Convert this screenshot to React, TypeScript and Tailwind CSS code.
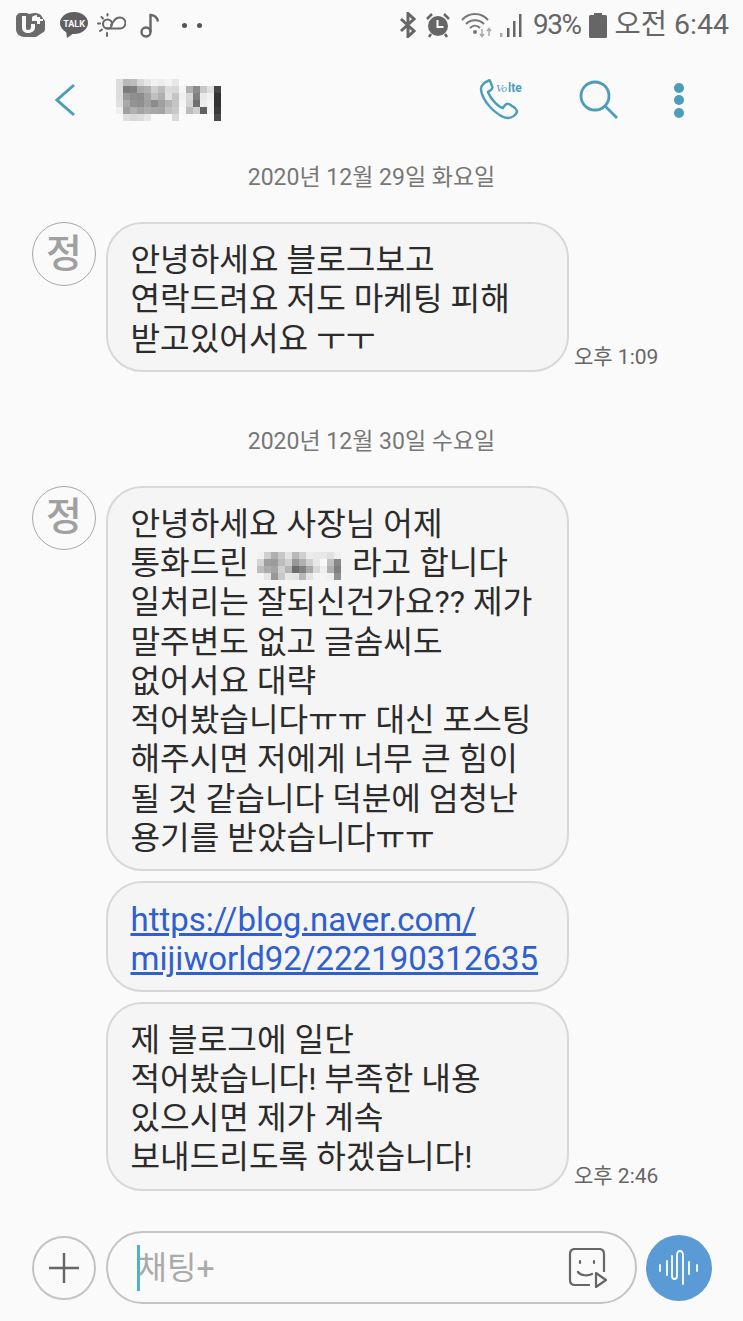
import { Fragment } from 'react'

const nameMosaic = [
  ['#dcdcdc', '#b9b9b9', '#bcbcbc', '#d8d8d8', '#e6e6e6', '#f2f2f2', '#ededed', '#f3f3f3', '#e8e8e8', '#fafafa', '#fafafa', '#fafafa', '#fafafa', '#fafafa', '#fafafa'],
  ['#dcdcdc', '#7b7b7b', '#808080', '#a8a8a8', '#b0b0b0', '#d0d0d0', '#bdbdbd', '#dcdcdc', '#d8d8d8', '#f4f4f4', '#b0b0b0', '#8c8c8c', '#c8c8c8', '#e0e0e0', '#444444'],
  ['#dcdcdc', '#999999', '#8f8f8f', '#8c8c8c', '#a4a4a4', '#c0c0c0', '#b0b0b0', '#e0e0e0', '#c4c4c4', '#f0f0f0', '#d8d8d8', '#808080', '#e8e8e8', '#f0f0f0', '#333333'],
  ['#e0e0e0', '#a8a8a8', '#949494', '#8f8f8f', '#a0a0a0', '#8c8c8c', '#a0a0a0', '#b4b4b4', '#c4c4c4', '#f4f4f4', '#d4d4d4', '#707070', '#eeeeee', '#f4f4f4', '#333333'],
  ['#f0f0f0', '#a0a0a0', '#b0b0b0', '#a4a4a4', '#acacac', '#a8a8a8', '#a4a4a4', '#c0c0c0', '#c8c8c8', '#f8f8f8', '#bcbcbc', '#d0d0d0', '#606060', '#f4f4f4', '#3a3a3a'],
  ['#fafafa', '#dedede', '#d8d8d8', '#dcdcdc', '#e6e6e6', '#fafafa', '#fafafa', '#fafafa', '#dadada', '#fafafa', '#fafafa', '#fafafa', '#fafafa', '#fafafa', '#4a4a4a'],
]

const inlineMosaic = [
  ['#f2f2f2', '#d0d0d0', '#b0b0b0', '#c8c8c8', '#e4e4e4', '#b8b8b8', '#d0d0d0', '#ececec', '#e8e8e8', '#e8e8e8', '#e0e0e0', '#f0f0f0'],
  ['#d4d4d4', '#a0a0a0', '#9c9c9c', '#bcbcbc', '#d0d0d0', '#989898', '#b0b0b0', '#d0d0d0', '#e8e8e8', '#f8f8f8', '#c0c0c0', '#888888'],
  ['#bcbcbc', '#acacac', '#a4a4a4', '#d0d0d0', '#b4b4b4', '#6c6c6c', '#808080', '#a8a8a8', '#d8d8d8', '#eeeeee', '#b0b0b0', '#808080'],
  ['#f4f4f4', '#e4e4e4', '#989898', '#c8c8c8', '#e8e8e8', '#e4e4e4', '#b8b8b8', '#e4e4e4', '#f4f4f4', '#f4f4f4', '#f0f0f0', '#909090'],
]

function Mosaic({ rows, cell, className }: { rows: string[][]; cell: number; className?: string }) {
  return (
    <svg width={rows[0].length * cell} height={rows.length * cell} className={className} shapeRendering="crispEdges">
      {rows.map((row, y) =>
        row.map((c, x) => <rect key={x} x={x * cell} y={y * cell} width={cell} height={cell} fill={c} />),
      )}
    </svg>
  )
}

function UplusIcon() {
  return (
    <svg width="30" height="26" viewBox="0 0 30 26" className="ml-[16px]">
      <path d="M5 1h6l2 1 5-1c4 0 7 1 8 4l3 4v8c0 2-1 3-3 4l-6 4H9c-5 0-9-3-9-8V6c0-3 2-5 5-5z" fill="#6b6b6b" />
      <path d="M6 4v12c0 3 3 5 6 5s7-2 7-5V12h-4v3c0 2-1 3-3 3s-2-1-2-3V4z" fill="#fafafa" />
      <path d="M16 5c1-1 3-2 5-2v2h3v2h3v2h-3v3h-3V9h-5z" fill="#fafafa" />
    </svg>
  )
}

function TalkIcon() {
  return (
    <svg width="28" height="26" viewBox="0 0 28 26" className="ml-[14px]">
      <ellipse cx="14" cy="11" rx="14" ry="11" fill="#5f5f5f" />
      <path d="M6 18l1 8 7-5z" fill="#5f5f5f" />
      <text x="14" y="14.5" textAnchor="middle" fontSize="9" fontWeight="700" fill="#fafafa" fontFamily="Roboto, sans-serif">TALK</text>
    </svg>
  )
}

function WeatherIcon() {
  return (
    <svg width="29" height="24" viewBox="0 0 29 24" fill="none" stroke="#666" strokeWidth="2" strokeLinecap="round" className="ml-[9px]">
      <circle cx="10.500" cy="11" r="4.500" />
      <path d="M10 15.500h13a5.500 5.500 0 0 0 0-11c-3 0-5 1.500-6.500 4L14 12" />
      <path d="M1 10.500h2M4.500 4l1.500 1.500M10.500 1v1.500M3 18l2-1.500M10 20v3" />
    </svg>
  )
}

function NoteIcon() {
  return (
    <svg width="20" height="25" viewBox="0 0 20 25" fill="none" stroke="#666" strokeWidth="2.400" className="ml-[14px]">
      <circle cx="6" cy="19" r="4.500" />
      <path d="M10.500 19V2c3 0 7 2 7.500 6.500" />
    </svg>
  )
}

function AlarmIcon() {
  return (
    <svg width="26" height="26" viewBox="0 0 26 26" className="ml-[8px]">
      <circle cx="13" cy="14" r="10" fill="#666" />
      <path d="M12.500 8v7h6" fill="none" stroke="#fafafa" strokeWidth="2" />
      <path d="M2 7l5-5M24 7l-5-5M6 22l-2 3M20 22l2 3" stroke="#666" strokeWidth="2.500" />
    </svg>
  )
}

function WifiIcon() {
  return (
    <svg width="32" height="26" viewBox="0 0 32 26" fill="none" stroke="#777" strokeWidth="2" className="ml-[10px]">
      <path d="M1 8c7-8 19-8 26 0M5 12c5-5 13-5 18 0M9 16c3-3 7-3 10 0" />
      <circle cx="14" cy="20" r="2" fill="#777" stroke="none" />
      <path d="M21 17v7M19 22l2 2.500 2-2.500" stroke="#aaa" strokeWidth="1.500" />
      <path d="M28 24v-7M26 19l2-2.500 2 2.500" stroke="#aaa" strokeWidth="1.500" />
    </svg>
  )
}

function SignalIcon() {
  return (
    <svg width="24" height="26" viewBox="0 0 24 26" fill="#666" className="ml-[6px]">
      <rect x="1" y="21" width="2.500" height="4" fill="#aaa" />
      <rect x="8" y="16" width="2.500" height="9" />
      <rect x="14" y="9" width="2.500" height="16" />
      <rect x="20" y="2" width="2.500" height="23" />
    </svg>
  )
}

function BatteryIcon() {
  return (
    <svg width="18" height="25" viewBox="0 0 18 25" fill="#666" className="ml-[8px]">
      <rect x="5" y="0" width="8" height="3" />
      <rect x="0" y="2" width="18" height="23" rx="1.500" />
    </svg>
  )
}

function StatusBar() {
  return (
    <div className="flex h-[50px] shrink-0 items-center justify-between">
      <div className="flex items-center">
        <UplusIcon />
        <TalkIcon />
        <WeatherIcon />
        <NoteIcon />
        <div className="ml-[22px] flex gap-[10px]">
          <span className="h-[5px] w-[5px] rounded-full bg-[#555]" />
          <span className="h-[5px] w-[5px] rounded-full bg-[#555]" />
        </div>
      </div>
      <div className="flex items-center pr-[14px] text-[28px] leading-none text-[#666]">
        <svg width="18" height="26" viewBox="0 0 18 26" fill="none" stroke="#666" strokeWidth="3" strokeLinejoin="miter">
          <path d="M2 7l13 12-6 5.500V1.500L15 7 2 19" />
        </svg>
        <AlarmIcon />
        <WifiIcon />
        <SignalIcon />
        <span className="ml-[10px] tracking-[-1.500px]">93%</span>
        <BatteryIcon />
        <span className="ml-[8px] text-[28.500px]">오전 6:44</span>
      </div>
    </div>
  )
}

function Header() {
  return (
    <div className="flex h-[100px] shrink-0 items-center pl-[54px] pr-[59px]">
      <svg width="22" height="34" viewBox="0 0 22 34" fill="none" stroke="#4b9dba" strokeWidth="3">
        <path d="M20 2L3 17l17 15" />
      </svg>
      <Mosaic rows={nameMosaic} cell={7} className="ml-[40px]" />
      <div className="ml-auto flex items-center">
        <svg width="46" height="42" viewBox="0 0 46 42" fill="none">
          <path
            d="M9 2c-3 1-7 4-7 8 0 6 5 14 10 19s12 10 17 10c4 0 8-3 9-6 0-2-1-3-2-4l-6-4c-2-1-3 0-4 1l-2 3c-5-1-13-10-15-16l3-2c1-1 2-3 1-4l-2-5C11 1 10 1 9 2z"
            stroke="#4b9dba"
            strokeWidth="2.400"
          />
          <text x="17" y="13" fontSize="11" fontStyle="italic" fill="#4b9dba" fontFamily="'Liberation Serif', serif">Vo</text>
          <text x="29" y="13" fontSize="12" fontWeight="700" fill="#4b9dba" fontFamily="Roboto, sans-serif">lte</text>
        </svg>
        <svg width="40" height="40" viewBox="0 0 40 40" fill="none" stroke="#4b9dba" strokeWidth="2.800" className="ml-[54px]">
          <circle cx="16" cy="16" r="14" />
          <path d="M26 26l12 12" />
        </svg>
        <div className="ml-[55px] flex flex-col gap-[2.500px]">
          <span className="h-[10px] w-[10px] rounded-full bg-[#4b9dba]" />
          <span className="h-[10px] w-[10px] rounded-full bg-[#4b9dba]" />
          <span className="h-[10px] w-[10px] rounded-full bg-[#4b9dba]" />
        </div>
      </div>
    </div>
  )
}

function DateRow({ label, className }: { label: string; className?: string }) {
  return (
    <div className={`flex h-[52px] items-center justify-center pt-[5px] text-[23px] text-[#777] ${className ?? ''}`}>
      {label}
    </div>
  )
}

function Avatar() {
  return (
    <div className="flex h-[64px] w-[64px] shrink-0 items-center justify-center rounded-full border-[1.500px] border-[#a8a8a8] text-[39px] font-medium leading-none text-[#a0a0a0]">
      정
    </div>
  )
}

function Bubble({ children, className }: { children: React.ReactNode; className?: string }) {
  return (
    <div className={`w-[463px] rounded-[36px] border-2 border-[#d8d8d8] bg-[#f5f5f5] pb-[11px] pl-[22.500px] pt-[17px] text-[32.200px] leading-[39.250px] text-[#2b2b2b] ${className ?? ''}`}>
      {children}
    </div>
  )
}

function Lines({ lines }: { lines: string[] }) {
  return (
    <>
      {lines.map((l) => (
        <Fragment key={l}>
          {l}
          <br />
        </Fragment>
      ))}
    </>
  )
}

function Time({ label }: { label: string }) {
  return <span className="mb-[2px] ml-[5px] text-[21px] leading-[26px] text-[#666]">{label}</span>
}

function Composer() {
  return (
    <div className="mb-[17px] mt-auto flex h-[73px] items-center pl-[32px]">
      <div className="flex h-[64px] w-[64px] shrink-0 items-center justify-center rounded-full border-2 border-[#c4c4c4]">
        <svg width="32" height="32" viewBox="0 0 32 32" stroke="#666" strokeWidth="2.400">
          <path d="M16 1v30M1 16h30" />
        </svg>
      </div>
      <div className="ml-[10px] flex h-[73px] w-[531px] items-center rounded-[37px] border-2 border-[#c4c4c4] pl-[29px] pr-[27px]">
        <span className="h-[46px] w-[2.500px] shrink-0 bg-[#4fb0cf]" />
        <span className="-ml-[2px] text-[32px] text-[#aaa]">채팅+</span>
        <svg width="40" height="40" viewBox="0 0 40 40" fill="none" stroke="#666" strokeWidth="2.200" className="ml-auto">
          <path d="M22 37H7c-3 0-5-2-5-5V6c0-3 2-5 5-5h24c3 0 5 2 5 5v18" />
          <path d="M12 13v2M26 13v2M10 24c3 4 10 4 14 2" strokeLinecap="round" />
          <path d="M28 25l10 7-10 7z" strokeLinejoin="round" />
        </svg>
      </div>
      <div className="ml-[9px] flex h-[66px] w-[66px] shrink-0 items-center justify-center rounded-full bg-[#5b9bd5]">
        <svg width="40" height="40" viewBox="0 0 40 40" fill="none" stroke="#fff" strokeWidth="1.800" strokeLinecap="round">
          <path d="M1 17v6M8 13v14M13 8v20c0 2 1 3 2.500 3S18 30 18 28V8c0-3 1-5 3-5s3 2 3 5v28M30 14v12M38 17v6" />
        </svg>
      </div>
    </div>
  )
}

export default function App() {
  return (
    <div className="flex h-[1321px] w-[743px] flex-col overflow-hidden bg-[#fafafa] font-['Roboto','Noto_Sans_CJK_KR',sans-serif]">
      <StatusBar />
      <Header />
      <DateRow label="2020년 12월 29일 화요일" />

      <div className="mt-[20px] flex gap-[10px] pl-[32px]">
        <Avatar />
        <div className="flex items-end">
          <Bubble>
            <Lines lines={['안녕하세요 블로그보고', '연락드려요 저도 마케팅 피해', '받고있어서요 ㅜㅜ']} />
          </Bubble>
          <Time label="오후 1:09" />
        </div>
      </div>

      <DateRow label="2020년 12월 30일 수요일" className="mt-[42px]" />

      <div className="mt-[20px] flex gap-[10px] pl-[32px]">
        <Avatar />
        <div className="flex flex-col gap-[10px]">
          <Bubble>
            안녕하세요 사장님 어제
            <br />
            통화드린 <Mosaic rows={inlineMosaic} cell={7} className="mr-[3px] inline-block align-[-6px]" /> 라고 합니다
            <br />
            <Lines
              lines={[
                '일처리는 잘되신건가요?? 제가',
                '말주변도 없고 글솜씨도',
                '없어서요 대략',
                '적어봤습니다ㅠㅠ 대신 포스팅',
                '해주시면 저에게 너무 큰 힘이',
                '될 것 같습니다 덕분에 엄청난',
                '용기를 받았습니다ㅠㅠ',
              ]}
            />
          </Bubble>
          <Bubble className="text-[33px] text-[#2f5fd0] underline">
            <Lines lines={['https://blog.naver.com/', 'mijiworld92/222190312635']} />
          </Bubble>
          <div className="flex items-end">
            <Bubble>
              <Lines lines={['제 블로그에 일단', '적어봤습니다! 부족한 내용', '있으시면 제가 계속', '보내드리도록 하겠습니다!']} />
            </Bubble>
            <Time label="오후 2:46" />
          </div>
        </div>
      </div>

      <Composer />
    </div>
  )
}
